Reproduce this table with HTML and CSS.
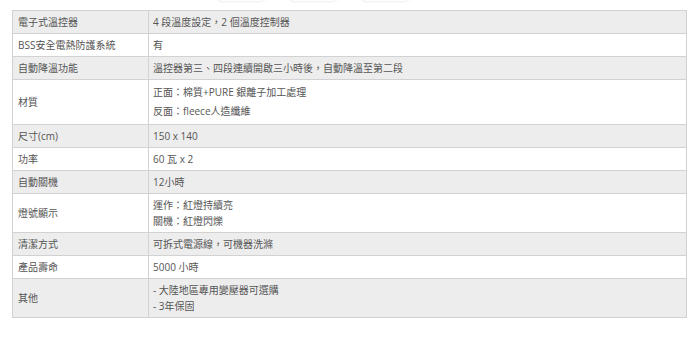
FILE: index.html
```html
<!DOCTYPE html>
<html lang="zh-Hant">
<head>
<meta charset="utf-8">
<link rel="stylesheet" href="styles.css">
</head>
<body>
<div class="page">
  <div class="tabs">
    <span class="tab"></span>
    <span class="tab"></span>
    <span class="tab"></span>
  </div>
  <table class="spec">
    <tr class="odd"><td class="k">電子式溫控器</td><td class="v">4 段溫度設定，2 個溫度控制器</td></tr>
    <tr><td class="k">BSS安全電熱防護系統</td><td class="v">有</td></tr>
    <tr class="odd"><td class="k">自動降溫功能</td><td class="v">溫控器第三、四段連續開啟三小時後，自動降溫至第二段</td></tr>
    <tr><td class="k">材質</td><td class="v tall">正面：棉質+PURE 銀離子加工處理<br>反面：fleece人造纖維</td></tr>
    <tr class="odd"><td class="k">尺寸(cm)</td><td class="v">150 x 140</td></tr>
    <tr><td class="k">功率</td><td class="v">60 瓦 x 2</td></tr>
    <tr class="odd"><td class="k">自動關機</td><td class="v">12小時</td></tr>
    <tr><td class="k">燈號顯示</td><td class="v">運作：紅燈持續亮<br>關機：紅燈閃爍</td></tr>
    <tr class="odd"><td class="k">清潔方式</td><td class="v">可拆式電源線，可機器洗滌</td></tr>
    <tr><td class="k">產品壽命</td><td class="v">5000 小時</td></tr>
    <tr class="odd"><td class="k">其他</td><td class="v">- 大陸地區專用變壓器可選購<br>- 3年保固</td></tr>
  </table>
</div>
</body>
</html>
```
FILE: styles.css
```css
html, body {
  margin: 0;
  padding: 0;
  background: #ffffff;
}
body {
  font-family: "Open Sans", "Noto Sans CJK TC", sans-serif;
  font-size: 10px;
  color: #555555;
  overflow: hidden;
}
.page {
  padding: 0 0 0 12px;
}
.tabs {
  display: flex;
  gap: 19px;
  height: 20px;
  margin-top: -19px;
  margin-left: 203px;
}
.tab {
  width: 53px;
  height: 20px;
  border-radius: 8px;
  background: #ffffff;
  box-shadow: 0 1px 2px rgba(0, 0, 0, 0.07);
}
.spec {
  margin-top: 9px;
  width: 675px;
  border-collapse: collapse;
  border: 1px solid #d2d2d2;
}
.spec td {
  border: 1px solid #d2d2d2;
  padding: 3px 4px 3px 4px;
  line-height: 16px;
  vertical-align: middle;
  text-align: left;
}
.spec tr.odd td {
  background: #ededed;
}
.spec td.k {
  width: 126px;
  padding-left: 5px;
}
.spec td.tall {
  line-height: 19px;
}
```
